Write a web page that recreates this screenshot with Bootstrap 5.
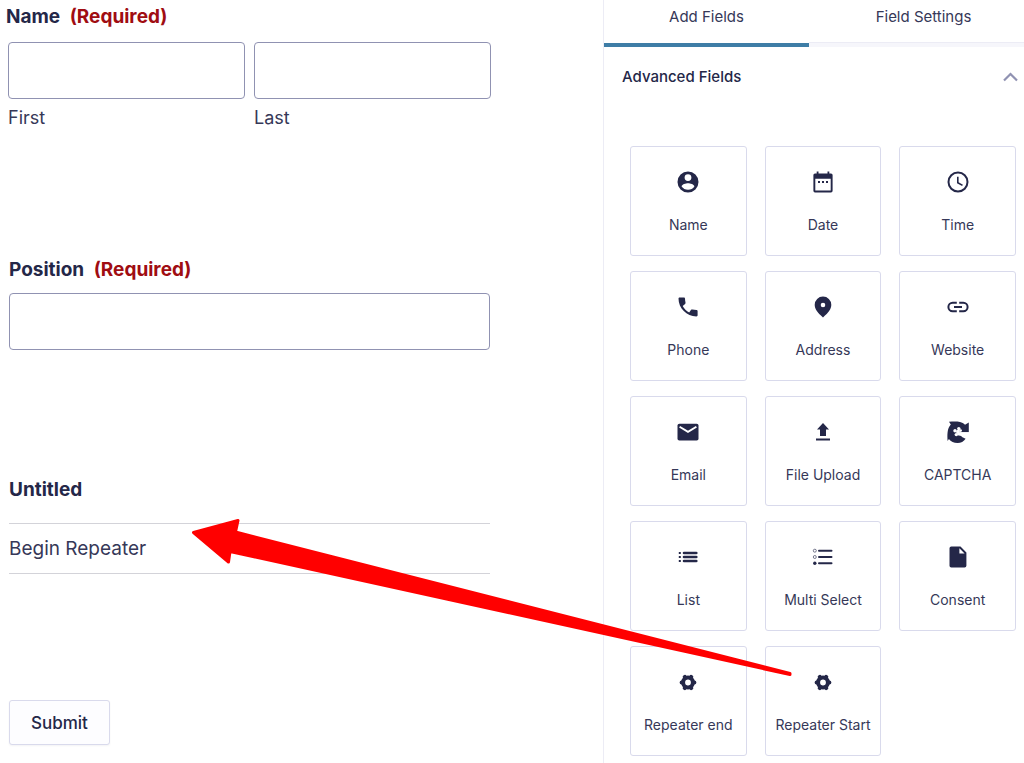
<!DOCTYPE html>
<html lang="en">
<head>
<meta charset="utf-8">
<meta name="viewport" content="width=device-width, initial-scale=1">
<title>Form editor</title>
<link href="https://cdn.jsdelivr.net/npm/bootstrap@5.3.0/dist/css/bootstrap.min.css" rel="stylesheet">
<style>
  :root { --ink: #242748; --ink-soft: #363858; --line: #d9daec; --field-line: #9092b2; }
  body { font-family: Inter, "Liberation Sans", sans-serif; font-size: 18px; line-height: 24px; color: var(--ink); background: #fff; }
  .editor { min-height: 100vh; }
  .form-canvas { padding: 5px 113px 18px 9px; }
  .field-title { font-size: 19px; font-weight: 700; line-height: 24px; }
  .required-note { color: #a00d12; margin-left: 5px; }
  .field-input { height: 57px; border: 1px solid var(--field-line); border-radius: 4px; box-shadow: none; }
  .sub-label { color: var(--ink-soft); margin-top: 7px; }
  .name-title { margin-left: -3px; margin-bottom: 13px; }
  .name-fields { gap: 9px; margin-left: -1px; margin-right: -1px; }
  .position-block { margin-top: 128px; }
  .position-block .field-title { margin-bottom: 11px; }
  .repeater-block { margin-top: 128px; }
  .repeater-text { margin-top: 21px; padding: 12px 0; border-top: 1px solid #d3d3d9; border-bottom: 1px solid #d3d3d9; color: var(--ink-soft); font-size: 19px; line-height: 25px; }
  .btn-submit { margin-top: 126px; height: 45px; padding: 0 21px; font-size: 17px; font-weight: 500; line-height: 24px; color: var(--ink); background: #fdfdff; border: 1px solid var(--line); border-radius: 3px; box-shadow: 0 1px 2px #1414320d; }
  .field-panel { width: 421px; border-left: 1px solid #ececf5; }
  .panel-tabs { height: 48px; }
  .panel-tab { border: 0; background: none; padding: 0 0 10px; font-size: 15px; color: var(--ink-soft); border-bottom: 4px solid #f6f6fb; box-shadow: inset 0 -1px #ececf5; margin-bottom: 1px; }
  .panel-tab.active { width: 205px; border-bottom-color: #3e7da6; box-shadow: none; }
  .panel-tab:not(.active) { padding-left: 14px; }
  .group-toggle { border: 0; background: none; padding: 17px 6px 17px 18px; font-size: 15px; font-weight: 500; color: var(--ink); }
  .tile-grid { display: grid; grid-template-columns: repeat(3, 1fr); gap: 15px 18px; padding: 40px 8px 6px 26px; }
  .field-tile { height: 110px; padding: 23px 0 0; gap: 21px; border: 1px solid var(--line); border-radius: 3px; background: #fff; font-size: 14px; line-height: 20px; color: var(--ink-soft); white-space: nowrap; }
  .field-tile svg { width: 24px; height: 24px; fill: var(--ink); color: var(--ink); }
  .pointer-arrow { left: 0; top: 0; pointer-events: none; }
</style>
</head>
<body>
<div class="editor d-flex position-relative">
  <main class="form-canvas flex-fill">
    <form>
      <div class="field-title name-title">Name <span class="required-note">(Required)</span></div>
      <div class="name-fields d-flex">
        <div class="flex-fill w-50">
          <input class="form-control field-input" id="first" type="text">
          <label class="sub-label d-block" for="first">First</label>
        </div>
        <div class="flex-fill w-50">
          <input class="form-control field-input" id="last" type="text">
          <label class="sub-label d-block" for="last">Last</label>
        </div>
      </div>
      <div class="position-block">
        <label class="field-title d-block" for="position">Position <span class="required-note">(Required)</span></label>
        <input class="form-control field-input" id="position" type="text">
      </div>
      <div class="repeater-block">
        <div class="field-title">Untitled</div>
        <div class="repeater-text">Begin Repeater</div>
      </div>
      <button class="btn btn-submit" type="button">Submit</button>
    </form>
  </main>

  <aside class="field-panel flex-shrink-0">
    <div class="panel-tabs d-flex" role="tablist">
      <button class="panel-tab active" type="button" role="tab" aria-selected="true">Add Fields</button>
      <button class="panel-tab flex-fill" type="button" role="tab" aria-selected="false">Field Settings</button>
    </div>
    <button class="group-toggle d-flex w-100 align-items-center justify-content-between" type="button" aria-expanded="true">
      Advanced Fields
      <svg width="15" height="10" viewBox="0 0 15 10" fill="none" stroke="#9092b2" stroke-width="2.200"><path d="M1 8.500 7.500 2 14 8.500"/></svg>
    </button>
    <div class="tile-grid">
      <button class="field-tile d-flex flex-column align-items-center" type="button">
        <svg viewBox="0 0 24 24"><path fill-rule="evenodd" d="M12 1.500a10.500 10.500 0 1 0 0 21 10.500 10.500 0 0 0 0-21Zm0 2.700a3.400 3.400 0 1 1 0 6.800 3.400 3.400 0 0 1 0-6.800Zm0 15.600c-2.700 0-5-1.300-6.400-3.300 0-2.100 4.300-3.300 6.400-3.300s6.400 1.200 6.400 3.300A7.700 7.700 0 0 1 12 19.800Z"/></svg>
        Name</button>
      <button class="field-tile d-flex flex-column align-items-center" type="button">
        <svg viewBox="0 0 24 24"><path fill-rule="evenodd" d="M5.700 1.500h1.800v2h9v-2h1.800v2H20a1.600 1.600 0 0 1 1.600 1.600v15.700a1.600 1.600 0 0 1-1.600 1.600H4a1.600 1.600 0 0 1-1.600-1.600V5.100A1.600 1.600 0 0 1 4 3.500h1.700v-2ZM4.300 8.700v11.900h15.400V8.700H4.300Zm2.700 2.400h2v2H7v-2Zm4 0h2v2h-2v-2Zm4 0h2v2h-2v-2Z"/></svg>
        Date</button>
      <button class="field-tile d-flex flex-column align-items-center" type="button">
        <svg viewBox="0 0 24 24"><g fill="none" stroke="currentColor"><circle cx="12" cy="12" r="9.500" stroke-width="2"/><path stroke-width="1.600" d="M11.800 6.700v6l4.700 2.700"/></g></svg>
        Time</button>
      <button class="field-tile d-flex flex-column align-items-center" type="button">
        <svg viewBox="0 0 24 24"><path d="M6.700 11c1.600 3 3.500 4.900 6.500 6.400l1.700-2.500c.4-.4 1-.5 1.600-.4 1.200.3 2.500.5 3.900.5.700 0 1.200.5 1.200 1.100v4.200c0 .7-.5 1.200-1.200 1.200C10.700 21.500 2.500 13.300 2.500 3.600c0-.7.500-1.200 1.200-1.200h4.200c.6 0 1.100.5 1.100 1.200 0 1.400.2 2.700.5 3.900.1.600 0 1.200-.4 1.600L6.700 11Z"/></svg>
        Phone</button>
      <button class="field-tile d-flex flex-column align-items-center" type="button">
        <svg viewBox="0 0 24 24"><path fill-rule="evenodd" d="M12 1.500a8.300 8.300 0 0 0-8.300 8.300c0 4 2.500 7.600 8.300 12.700 5.800-5.100 8.300-8.700 8.300-12.700A8.300 8.300 0 0 0 12 1.500Zm0 6.200a2.300 2.300 0 1 1 0 4.600 2.300 2.300 0 0 1 0-4.600Z"/></svg>
        Address</button>
      <button class="field-tile d-flex flex-column align-items-center" type="button">
        <svg viewBox="0 0 24 24"><path fill="none" stroke="currentColor" stroke-width="2" d="M10.800 7.700H6.700a4.300 4.300 0 0 0 0 8.600h4.100M13.200 7.700h4.100a4.300 4.300 0 0 1 0 8.600h-4.100M8 12h8"/></svg>
        Website</button>
      <button class="field-tile d-flex flex-column align-items-center" type="button">
        <svg viewBox="0 0 24 24"><rect x="1.500" y="3.700" width="21" height="16.800" rx="1.800"/><path d="m3.600 6.700 8.400 5.200 8.400-5.200" fill="none" stroke="#fff" stroke-width="1.900"/></svg>
        Email</button>
      <button class="field-tile d-flex flex-column align-items-center" type="button">
        <svg viewBox="0 0 24 24"><path d="m12 3 6 6.500h-3V16H9V9.500H6L12 3ZM5 18.500h14v2H5z"/></svg>
        File Upload</button>
      <button class="field-tile d-flex flex-column align-items-center" type="button">
        <svg viewBox="0 0 24 24"><path d="M3 1.700c4-.1 8-.4 11 .4 2 .5 3.600 1.300 5 2.600l3.800-2.300v9.800H14v2.300l2 2.500 3.600 1.700c-1.800 2.700-4.700 4.300-8 4.300-3.800 0-6.700-1.400-8.700-4L1.600 21C1.300 15.500.9 8.700 4.800 4.600L3 1.700Z"/><g fill="#fff"><circle cx="12.800" cy="8.600" r="1.700"/><circle cx="9" cy="10.800" r="1.700"/><circle cx="10.300" cy="14.600" r="1.700"/><circle cx="14.600" cy="10.600" r="1.400"/><circle cx="12" cy="11.800" r="2"/><path d="m11 12.300h12v2.500h-5.500l-2 1.300-4-.8z"/></g></svg>
        CAPTCHA</button>
      <button class="field-tile d-flex flex-column align-items-center" type="button">
        <svg viewBox="0 0 24 24"><path fill="none" stroke="currentColor" stroke-width="2.600" stroke-linecap="round" d="M8 8h12.300M8 12h12.300M8 16h12.300"/><path d="M2.800 7h2v2h-2zM2.800 11h2v2h-2zM2.800 15h2v2h-2z"/></svg>
        List</button>
      <button class="field-tile d-flex flex-column align-items-center" type="button">
        <svg viewBox="0 0 24 24"><path fill="none" stroke="currentColor" stroke-width="2" stroke-linecap="round" d="M8 5.700h12.500M8 12h12.500M8 18.300h12.500"/><g fill="none" stroke="currentColor" stroke-width=".6"><circle cx="3.800" cy="5.700" r="1.500"/><circle cx="3.800" cy="12" r="1.500"/></g><circle cx="3.800" cy="18.300" r="1.700"/></svg>
        Multi Select</button>
      <button class="field-tile d-flex flex-column align-items-center" type="button">
        <svg viewBox="0 0 24 24"><path fill-rule="evenodd" d="M5.300 1.500h9.200l5.900 5.900v13.300a1.800 1.800 0 0 1-1.800 1.800H5.300a1.800 1.800 0 0 1-1.800-1.800V3.300a1.800 1.800 0 0 1 1.800-1.800Zm8.100 1.800v5.200h5.200l-5.200-5.200Z"/></svg>
        Consent</button>
      <button class="field-tile d-flex flex-column align-items-center" type="button">
        <svg viewBox="0 0 24 24"><g fill="none" stroke="currentColor"><circle cx="12" cy="12.500" r="4.900" stroke-width="4"/><path stroke-width="4.200" stroke-linecap="round" d="M17.500 12.500h.8M6.500 12.500h-.8M14.700 7.800l.5-.8M9.300 7.800 8.800 7M14.700 17.200l.5.8M9.300 17.200l-.5.8"/></g></svg>
        Repeater end</button>
      <button class="field-tile d-flex flex-column align-items-center" type="button">
        <svg viewBox="0 0 24 24"><g fill="none" stroke="currentColor"><circle cx="12" cy="12.500" r="4.900" stroke-width="4"/><path stroke-width="4.200" stroke-linecap="round" d="M17.500 12.500h.8M6.500 12.500h-.8M14.700 7.800l.5-.8M9.300 7.800 8.800 7M14.700 17.200l.5.8M9.300 17.200l-.5.8"/></g></svg>
        Repeater Start</button>
    </div>
  </aside>

  <svg class="pointer-arrow position-absolute" width="800" height="690" viewBox="0 0 800 690" aria-hidden="true">
    <path fill="#f00" stroke="#f00" stroke-width="3" stroke-linejoin="round" d="M193.500 532.500 238 520.500 235.500 532 790 673.500 790 674.500 230 551.500 228.500 562Z"/>
  </svg>
</div>
<script src="https://cdn.jsdelivr.net/npm/bootstrap@5.3.0/dist/js/bootstrap.bundle.min.js"></script>
</body>
</html>
